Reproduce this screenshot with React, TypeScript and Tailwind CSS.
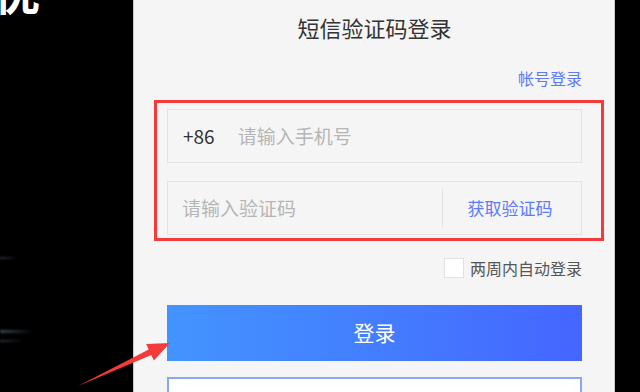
const cjk = "font-['Noto_Sans_CJK_SC','Noto_Sans',sans-serif]";

const Arrow = () => (
  <svg className="pointer-events-none absolute left-0 top-0" width="640" height="392" viewBox="0 0 640 392">
    <polygon
      points="78,386 148.7,349.6 146.2,344.1 170,343 153.8,360.5 151.3,355"
      fill="#f53a3a"
    />
  </svg>
);

export default function App() {
  return (
    <div className={`relative flex h-[392px] w-[640px] overflow-hidden bg-black ${cjk}`}>
      {/* dark backdrop on the left */}
      <div className="relative h-full w-[133px] shrink-0 overflow-hidden bg-black">
        <span className="absolute -top-[33px] left-[-6px] text-[46px] font-bold leading-none text-white">优</span>
        <div className="absolute left-0 top-[257px] h-[2px] w-[18px] bg-gradient-to-r from-[#2a3440] to-transparent blur-[1px]" />
        <div className="absolute left-0 top-[330px] h-[3px] w-[34px] bg-gradient-to-r from-[#3a4654] to-transparent blur-[1px]" />
        <div className="absolute left-0 top-[340px] h-[2px] w-[24px] bg-gradient-to-r from-[#2a3440] to-transparent blur-[1px]" />
      </div>

      {/* login panel */}
      <div className="relative flex h-full w-[482px] shrink-0 flex-col overflow-hidden border-x border-[#c9c9c9] bg-[#f5f5f5] pl-[33px] pr-[32px]">
        <h1 className="shrink-0 pt-[13px] text-center text-[22px] leading-[28px] text-[#333]">短信验证码登录</h1>

        <div className="mt-[27px] flex h-[20px] shrink-0 justify-end">
          <a className="text-[16px] leading-[20px] text-[#5b7bff]">帐号登录</a>
        </div>

        <div className="mt-[21px] flex h-[54px] shrink-0 items-center border border-[#e3e3e3] pl-[15px]">
          <span className="text-[19px] text-[#333]">+86</span>
          <input
            className="ml-[23px] min-w-0 flex-1 bg-transparent text-[19px] outline-none placeholder:text-[#b5b5b5]"
            placeholder="请输入手机号"
          />
        </div>

        <div className="mt-[18px] flex h-[54px] shrink-0 items-center border border-[#e3e3e3]">
          <input
            className="min-w-0 flex-1 bg-transparent pl-[14px] text-[19px] outline-none placeholder:text-[#b5b5b5]"
            placeholder="请输入验证码"
          />
          <div className="h-[38px] w-px bg-[#e0e0e0]" />
          <button className="w-[138px] pr-[4px] text-[17px] text-[#5b7bff]">获取验证码</button>
        </div>

        <label className="mt-[23px] flex h-[20px] shrink-0 items-center justify-end gap-[6px]">
          <span className="h-[20px] w-[20px] border border-[#e2e2e2] bg-white" />
          <span className="text-[16px] leading-[20px] text-[#555]">两周内自动登录</span>
        </label>

        <button className="mt-[27px] h-[56px] w-full shrink-0 bg-gradient-to-r from-[#4394ff] to-[#4565ff] text-[21px] text-white">
          登录
        </button>

        <div className="mt-[16px] h-[40px] w-full shrink-0 border-2 border-[#8ba5ff] bg-white" />

        {/* red annotation frame */}
        <div className="pointer-events-none absolute left-[20px] top-[100px] h-[141px] w-[450px] border-[3px] border-[#f53a3a]" />
      </div>

      <div className="h-full flex-1 bg-black" />

      <Arrow />
    </div>
  );
}
